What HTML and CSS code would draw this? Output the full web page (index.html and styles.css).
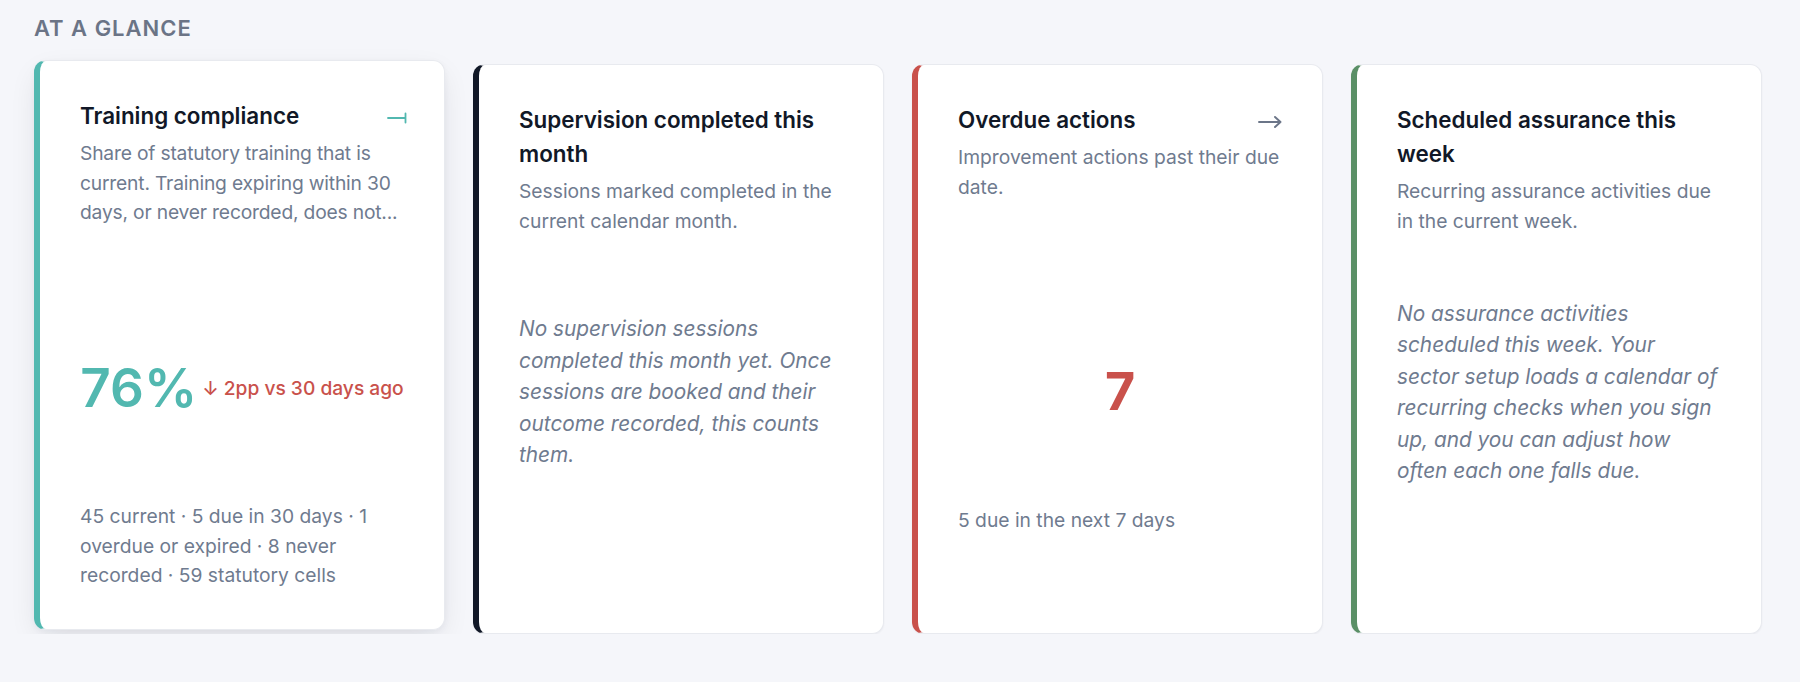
FILE: index.html
```html
<!DOCTYPE html>
<html lang="en">
<head>
<meta charset="utf-8">
<title>At a glance</title>
<link rel="stylesheet" href="styles.css">
</head>
<body>
<section class="glance">
  <h2 class="glance-label">At a glance</h2>
  <div class="cards">
    <article class="card card--teal card--raised">
      <div class="card-head">
        <div class="card-title-row">
          <h3 class="card-title">Training compliance</h3>
          <svg class="card-arrow" width="20" height="12" viewBox="0 0 20 12" aria-hidden="true">
            <path d="M1 6H18.5M18.5 1.5V10.5" fill="none" stroke="#52b8b0" stroke-width="1.8" stroke-linecap="round"/>
          </svg>
        </div>
        <p class="card-desc card-desc--clamp">Share of statutory training that is current. Training expiring within 30 days, or never recorded, does not...</p>
      </div>
      <div class="card-body">
        <div class="metric">
          <span class="metric-value metric-value--teal">76%</span>
          <span class="metric-delta">↓ 2pp vs 30 days ago</span>
        </div>
      </div>
      <p class="card-foot">45 current · 5 due in 30 days · 1 overdue or expired · 8 never recorded · 59 statutory cells</p>
    </article>

    <article class="card card--navy">
      <div class="card-head">
        <div class="card-title-row">
          <h3 class="card-title">Supervision completed this month</h3>
        </div>
        <p class="card-desc">Sessions marked completed in the current calendar month.</p>
      </div>
      <div class="card-body card-body--empty">
        <p class="empty">No supervision sessions completed this month yet. Once sessions are booked and their outcome recorded, this counts them.</p>
      </div>
    </article>

    <article class="card card--red">
      <div class="card-head">
        <div class="card-title-row">
          <h3 class="card-title">Overdue actions</h3>
          <svg class="card-arrow" width="24" height="12" viewBox="0 0 24 12" aria-hidden="true">
            <path d="M1 6H22.5M17 1L22.5 6L17 11" fill="none" stroke="#6b7588" stroke-width="1.9" stroke-linecap="round" stroke-linejoin="round"/>
          </svg>
        </div>
        <p class="card-desc">Improvement actions past their due date.</p>
      </div>
      <div class="card-body">
        <span class="metric-value metric-value--red">7</span>
      </div>
      <p class="card-foot">5 due in the next 7 days</p>
    </article>

    <article class="card card--green">
      <div class="card-head">
        <div class="card-title-row">
          <h3 class="card-title">Scheduled assurance this week</h3>
        </div>
        <p class="card-desc">Recurring assurance activities due in the current week.</p>
      </div>
      <div class="card-body card-body--empty">
        <p class="empty">No assurance activities scheduled this week. Your sector setup loads a calendar of recurring checks when you sign up, and you can adjust how often each one falls due.</p>
      </div>
    </article>
  </div>
</section>
</body>
</html>
```

FILE: styles.css
```css
* { box-sizing: border-box; }

body {
  margin: 0;
  background: #f5f6fa;
  font-family: Inter, "Noto Sans", "Liberation Sans", sans-serif;
  -webkit-font-smoothing: antialiased;
}

.glance {
  padding: 16px 38px 0 34px;
}

.glance-label {
  margin: 0;
  font-size: 22px;
  line-height: 24px;
  font-weight: 600;
  letter-spacing: 0.045em;
  text-transform: uppercase;
  color: #6b7486;
}

.cards {
  display: grid;
  grid-template-columns: repeat(4, minmax(0, 1fr));
  gap: 28px;
  margin-top: 24px;
}

.card {
  display: flex;
  flex-direction: column;
  min-width: 0;
  background: #ffffff;
  border: 1px solid #e8eaef;
  border-left: 6px solid #111827;
  border-radius: 12px;
  padding: 38px 40px;
  box-shadow: 0 1px 2px rgba(16, 24, 40, 0.05);
}

.card--teal { border-left-color: #52b8b0; }
.card--navy { border-left-color: #111827; }
.card--red { border-left-color: #c9514b; }
.card--green { border-left-color: #5a8f66; }

.card--raised {
  transform: translateY(-4px);
  box-shadow: 0 10px 30px -6px rgba(16, 24, 40, 0.12), 0 2px 6px rgba(16, 24, 40, 0.04);
}

.card--raised .card-arrow {
  transform: translateX(3px);
}

.card-head {
  min-height: 175px;
}

.card-title-row {
  display: flex;
  justify-content: space-between;
  align-items: flex-start;
  gap: 16px;
}

.card-title {
  margin: 0;
  font-size: 22.4px;
  line-height: 34px;
  font-weight: 600;
  color: #111827;
}

.card-arrow {
  flex: none;
  margin-top: 13px;
}

.card-desc {
  margin: 6px 0 0;
  font-size: 19.25px;
  line-height: 29.5px;
  color: #6f7b8f;
}

.card-desc--clamp {
  letter-spacing: -0.01em;
  display: -webkit-box;
  -webkit-line-clamp: 3;
  -webkit-box-orient: vertical;
  overflow: hidden;
}

.card-body {
  height: 228px;
  display: flex;
  align-items: center;
  justify-content: center;
}

.card-body--empty {
  justify-content: flex-start;
}

.metric {
  display: flex;
  align-items: center;
  gap: 5px;
}

.metric-value {
  font-size: 53px;
  line-height: 1.21;
  font-weight: 600;
}

.metric-value--teal { color: #52b8b0; }
.metric-value--red { color: #c9514b; font-weight: 700; font-size: 52px; }

.metric-delta {
  font-size: 19.2px;
  font-weight: 500;
  color: #c9514b;
  white-space: nowrap;
}

.empty {
  margin: 0;
  font-style: italic;
  font-size: 20.8px;
  line-height: 31.5px;
  color: #6f7b8f;
}

.card-foot {
  margin: 0;
  font-size: 19.25px;
  line-height: 29.5px;
  color: #6f7b8f;
}
```
